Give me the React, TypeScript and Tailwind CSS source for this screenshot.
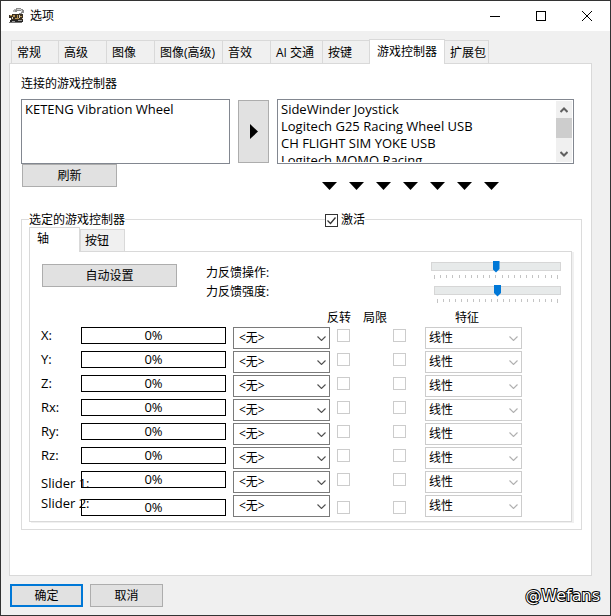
import type { ReactNode } from 'react';

const tabs = [
  { label: '常规', width: 'w-12' },
  { label: '高级', width: 'w-[49px]' },
  { label: '图像', width: 'w-[49px]' },
  { label: '图像(高级)', width: 'w-[69px]' },
  { label: '音效', width: 'w-[49px]' },
  { label: 'AI 交通', width: 'w-[53px]' },
  { label: '按键', width: 'w-12' },
  { label: '游戏控制器', width: 'w-[76px]', active: true },
  { label: '扩展包', width: 'w-[45px]' },
];

const axes = ['X', 'Y', 'Z', 'Rx', 'Ry', 'Rz', 'Slider 1', 'Slider 2'];
const devices = [
  'SideWinder Joystick',
  'Logitech G25 Racing Wheel USB',
  'CH FLIGHT SIM YOKE USB',
  'Logitech MOMO Racing',
  'Logitech WingMan',
];

function AppIcon() {
  return (
    <svg viewBox="0 0 16 16" className="h-4 w-4" shapeRendering="crispEdges" aria-hidden="true">
      <path d="M5 1h4v1h-4zM4 2h3v2H4z" fill="#b5b5b5" />
      <path d="M7 0h5v1h2v1h1v3h-2v1h-3V5h2V3H8v1H6V2h1z" fill="#8c8c8c" />
      <path d="M8 1h4v1H8zM12 2h1v2h-1z" fill="#d0d0d0" />
      <path d="M0 7h3v-1h11v6H2v-2H0z" fill="#3a3022" />
      <path d="M1 7h2v1H1zM4 7h2v2H4zM8 7h1v3H8zM11 8h2v1h-2zM6 10h4v1H6z" fill="#b89452" />
      <path d="M3 9h1v2H3zM10 7h1v3h-1zM13 10h1v1h-1z" fill="#d8d2c4" />
      <path d="M1 12h13v2H1z" fill="#242424" />
      <path d="M3 13h3v1H3zM9 12h4v1H9z" fill="#999" />
      <path d="M0 14h13v1H0z" fill="#737373" />
    </svg>
  );
}

function PushButton({ children, className }: { children: ReactNode; className: string }) {
  return (
    <button
      type="button"
      className={`flex h-[23px] items-center justify-center bg-[#e1e1e1] leading-4 ${className}`}
    >
      {children}
    </button>
  );
}

function Chevron({ className }: { className: string }) {
  return (
    <svg viewBox="0 0 9 5" className={`h-[5px] w-[9px] fill-none ${className}`} aria-hidden="true">
      <path d="M0.5 0.5l4 4 4-4" strokeWidth="1.1" />
    </svg>
  );
}

function DropDown({ label, value, disabled = false }: { label: string; value: string; disabled?: boolean }) {
  return (
    <div className="relative">
      <select
        aria-label={label}
        disabled={disabled}
        className={`block h-[22px] w-full appearance-none border bg-white text-xs leading-4 text-black opacity-100 ${
          disabled ? 'border-[#cccccc] pl-[3px]' : 'border-[#7a7a7a] pl-[5px]'
        }`}
      >
        <option>{value}</option>
      </select>
      <Chevron
        className={`pointer-events-none absolute top-[9px] right-1 ${disabled ? 'stroke-[#b0b0b0]' : 'stroke-[#505050]'}`}
      />
    </div>
  );
}

function ForceSlider({ label, width }: { label: string; width: string }) {
  const ticks = Array.from({ length: 21 }, (_, i) => i);
  return (
    <div className={`h-6 ${width}`}>
      <input
        type="range"
        aria-label={label}
        defaultValue={50}
        className="block h-3 w-full appearance-none bg-transparent [&::-webkit-slider-runnable-track]:h-[9px] [&::-webkit-slider-runnable-track]:border [&::-webkit-slider-runnable-track]:border-[#d6d6d6] [&::-webkit-slider-runnable-track]:bg-[#e7eaea] [&::-webkit-slider-thumb]:-mt-[2px] [&::-webkit-slider-thumb]:h-3 [&::-webkit-slider-thumb]:w-[7px] [&::-webkit-slider-thumb]:appearance-none [&::-webkit-slider-thumb]:bg-[#0078d7] [&::-webkit-slider-thumb]:[clip-path:polygon(0_0,100%_0,100%_70%,50%_100%,0_70%)]"
      />
      <div className="flex justify-between px-[3px] pt-[3px]">
        {ticks.map((t) => (
          <span key={t} className="h-[3px] w-px bg-[#c4c4c4] first:h-1 last:h-1" />
        ))}
      </div>
    </div>
  );
}

function CheckColumn({ name }: { name: string }) {
  return (
    <div className="flex flex-col items-end gap-[11px] pt-[2px]">
      {axes.map((axis) => (
        <input
          key={axis}
          type="checkbox"
          disabled
          aria-label={`${axis} ${name}`}
          className="block h-[13px] w-[13px] appearance-none border border-[#cccccc] bg-white last:mt-1"
        />
      ))}
    </div>
  );
}

export default function App() {
  return (
    <div className="flex min-h-screen flex-col border border-[#333333] bg-[#f0f0f0] font-['Open_Sans','Noto_Sans_CJK_SC',sans-serif] text-xs leading-4 text-black">
      <header className="flex h-[30px] items-center bg-white pl-2">
        <AppIcon />
        <h1 className="ml-1 flex-1 pl-px">选项</h1>
        <div className="flex">
          <button type="button" aria-label="最小化" className="flex h-[30px] w-[46px] items-center justify-center">
            <svg viewBox="0 0 10 10" className="h-[10px] w-[10px]" shapeRendering="crispEdges">
              <path d="M0 5h10v1H0z" />
            </svg>
          </button>
          <button type="button" aria-label="最大化" className="flex h-[30px] w-[46px] items-center justify-center">
            <span className="h-[10px] w-[10px] border border-black" />
          </button>
          <button type="button" aria-label="关闭" className="flex h-[30px] w-[46px] items-center justify-center">
            <svg viewBox="0 0 10 10" className="h-[10px] w-[10px] fill-none stroke-black">
              <path d="M0 0l10 10M10 0L0 10" />
            </svg>
          </button>
        </div>
      </header>

      <div className="flex flex-1 flex-col pt-2 pr-[18px] pl-2">
        <div role="tablist" className="flex items-end pl-[2px]">
          {tabs.map((tab) => (
            <button
              key={tab.label}
              type="button"
              role="tab"
              aria-selected={!!tab.active}
              className={`shrink-0 border border-[#d9d9d9] whitespace-nowrap ${tab.width} ${
                tab.active
                  ? 'z-10 -mb-px h-[25px] border-b-0 bg-white pb-px'
                  : '-mr-px h-[23px] border-b-0 bg-[#f0f0f0] pt-[2px] pl-[5px] text-left last:-ml-px'
              }`}
            >
              {tab.label}
            </button>
          ))}
        </div>

        <main className="flex-1 border border-[#d9d9d9] bg-white pr-[9px] pb-10 pl-[11px]">
          <h2 className="pt-3">连接的游戏控制器</h2>
          <div className="flex items-start pt-[7px] pr-2">
            <div className="w-[209px]">
              <select
                size={4}
                aria-label="连接的游戏控制器"
                className="block h-[65px] w-full appearance-none overflow-hidden border border-[#828790] bg-white p-0 pl-[2px] text-[13px] leading-[17px]"
              >
                <option className="h-[17px] min-h-0 px-px py-0">KETENG Vibration Wheel</option>
              </select>
              <PushButton className="ml-px w-[95px] border border-[#adadad]">刷新</PushButton>
            </div>
            <button
              type="button"
              aria-label="添加"
              className="mx-2 mt-px flex h-[63px] w-[31px] items-center justify-center border border-[#adadad] bg-[#e1e1e1]"
            >
              <svg viewBox="0 0 8 15" className="h-[15px] w-2">
                <path d="M0 0l8 7.500L0 15z" />
              </svg>
            </button>
            <div className="min-w-0 flex-1">
              <div className="flex h-[65px] border border-[#828790] bg-white pr-px pb-px">
                <select
                  size={4}
                  aria-label="可用设备"
                  className="block h-[62px] min-w-0 flex-1 appearance-none overflow-hidden border-0 bg-white p-0 pl-[2px] text-[13px] leading-[17px]"
                >
                  {devices.map((d) => (
                    <option key={d} className="h-[17px] min-h-0 px-px py-0">
                      {d}
                    </option>
                  ))}
                </select>
                <div className="mt-px flex w-4 flex-col bg-[#f0f0f0]">
                  <button type="button" aria-label="向上滚动" className="flex h-[17px] items-center justify-center">
                    <svg viewBox="0 0 8 6" className="h-[6px] w-2 fill-none stroke-[#606060]">
                      <path d="M0.500 5L4 1.500 7.500 5" strokeWidth="2" />
                    </svg>
                  </button>
                  <div className="h-5 bg-[#cdcdcd]" />
                  <button type="button" aria-label="向下滚动" className="mt-auto flex h-[17px] items-center justify-center">
                    <svg viewBox="0 0 8 6" className="h-[6px] w-2 fill-none stroke-[#606060]">
                      <path d="M0.500 1L4 4.500 7.500 1" strokeWidth="2" />
                    </svg>
                  </button>
                </div>
              </div>
              <div className="flex gap-3 pt-[18px] pl-[45px]">
                {[0, 1, 2, 3, 4, 5, 6].map((n) => (
                  <svg key={n} viewBox="0 0 15 8" className="h-2 w-[15px]" aria-hidden="true">
                    <path d="M0 0h15L7.500 8z" />
                  </svg>
                ))}
              </div>
            </div>
          </div>

          <section
            aria-label="选定的游戏控制器"
            className="relative mt-[29px] border border-[#dcdcdc] pt-[7px] pr-[9px] pb-[7px] pl-[7px]"
          >
            <h2 className="absolute -top-2 left-[7px] bg-white">选定的游戏控制器</h2>
            <label className="absolute -top-2 left-[303px] flex items-center gap-[3px] bg-white">
              <span className="relative h-[13px] w-[13px]">
                <input
                  type="checkbox"
                  defaultChecked
                  className="peer block h-[13px] w-[13px] appearance-none border border-[#333333] bg-white"
                />
                <svg
                  viewBox="0 0 13 13"
                  className="pointer-events-none absolute inset-0 hidden h-[13px] w-[13px] fill-none stroke-[#333333] peer-checked:block"
                >
                  <path d="M2.500 6.500l3 3 5-6" strokeWidth="1.300" />
                </svg>
              </span>
              激活
            </label>

            <div role="tablist" className="flex items-end">
              <button
                type="button"
                role="tab"
                aria-selected="true"
                className="z-10 -mb-px h-[25px] w-[51px] border border-b-0 border-[#d9d9d9] bg-white pb-[2px] pl-[7px] text-left"
              >
                轴
              </button>
              <button
                type="button"
                role="tab"
                aria-selected="false"
                className="h-[22px] w-[45px] border border-b-0 border-[#d9d9d9] bg-[#f0f0f0] pl-1 text-left"
              >
                按钮
              </button>
            </div>

            <div className="border border-[#d9d9d9] bg-white pr-[10px] pb-1 pl-[11px] shadow-[2px_1px_0_#f0f0f0]">
              <div className="flex items-start pt-2 pb-px">
                <PushButton className="mt-1 ml-px w-[135px] border border-[#adadad]">自动设置</PushButton>
                <div className="ml-[29px] flex flex-col gap-[3px] pt-[5px]">
                  <span>力反馈操作:</span>
                  <span>力反馈强度:</span>
                </div>
                <div className="ml-auto flex flex-col items-end">
                  <ForceSlider label="力反馈操作" width="w-[130px]" />
                  <ForceSlider label="力反馈强度" width="w-[127px]" />
                </div>
              </div>

              <div className="flex">
                <div className="relative z-10 w-10 shrink-0 pt-[18px] text-[13px] leading-4 whitespace-nowrap">
                  <div className="flex flex-col gap-2">
                    {axes.slice(0, 6).map((axis) => (
                      <span key={axis}>{axis}:</span>
                    ))}
                  </div>
                  <div className="flex flex-col gap-1 pt-3">
                    {axes.slice(6).map((axis) => (
                      <span key={axis}>{axis}:</span>
                    ))}
                  </div>
                </div>
                <div className="flex min-w-[100px] flex-1 flex-col gap-[7px] pt-[18px]">
                  {axes.map((axis) => (
                    <div
                      key={axis}
                      role="progressbar"
                      aria-label={axis}
                      aria-valuenow={0}
                      className="h-[17px] border border-black text-center text-[13px] leading-[15px] last:mt-1"
                    >
                      0%
                    </div>
                  ))}
                </div>
                <div className="ml-[7px] flex w-[97px] flex-col gap-[2px] pt-[18px]">
                  {axes.map((axis) => (
                    <DropDown key={axis} label={`${axis} 功能`} value="<无>" />
                  ))}
                </div>
                <div className="flex w-[95px]">
                  <div className="w-5">
                    <div className="-ml-[3px] h-[18px] w-6 pt-px">反转</div>
                    <CheckColumn name="反转" />
                  </div>
                  <div className="ml-[13px] w-[43px]">
                    <div className="h-[18px] pt-px">局限</div>
                    <CheckColumn name="局限" />
                  </div>
                </div>
                <div className="mr-[39px] w-[97px]">
                  <div className="h-[18px] pt-px pl-[30px]">特征</div>
                  <div className="flex flex-col gap-[2px]">
                    {axes.map((axis) => (
                      <DropDown key={axis} label={`${axis} 特征`} value="线性" disabled />
                    ))}
                  </div>
                </div>
              </div>
            </div>
          </section>
        </main>
      </div>

      <footer className="flex items-center gap-[7px] pt-2 pr-[10px] pb-2 pl-[9px]">
        <PushButton className="w-[73px] border-2 border-[#0078d7]">确定</PushButton>
        <PushButton className="w-[73px] border border-[#adadad]">取消</PushButton>
        <span className="ml-auto font-['DejaVu_Sans'] text-base leading-5 text-white [-webkit-text-stroke:2px_black] [paint-order:stroke_fill]">
          @Wefans
        </span>
      </footer>
    </div>
  );
}
